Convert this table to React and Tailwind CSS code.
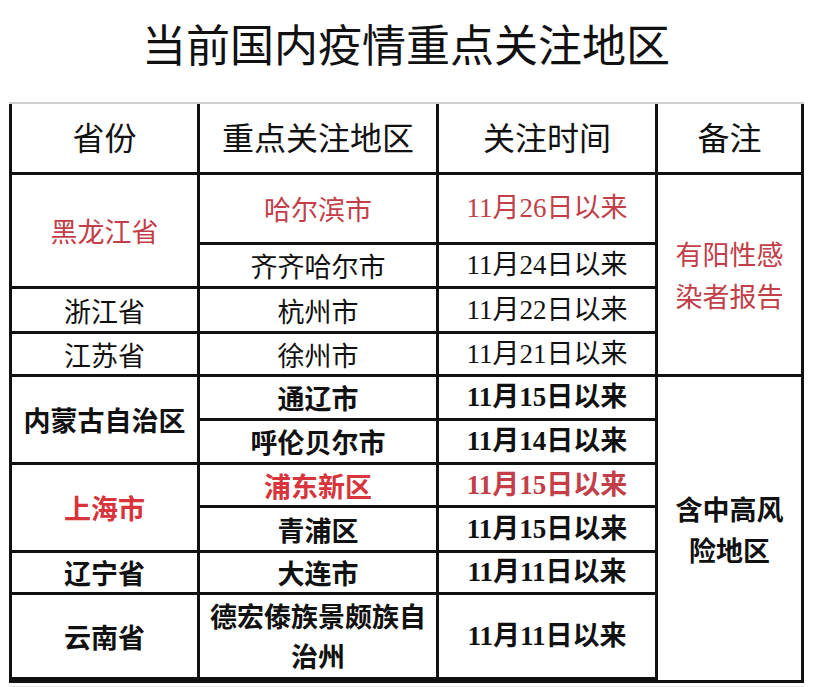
const SANS = "font-['Noto_Sans_CJK_SC','Noto_Sans',sans-serif]"

// date cells use serif digits with CJK fallback
function DateCell({ text, red, bold }) {
  return (
    <div
      className={`bg-white flex items-center justify-center text-[27px] leading-none font-['Liberation_Serif','Noto_Sans_CJK_SC',serif] ${bold ? 'font-bold' : 'font-normal'} ${red ? 'text-[#c23e48]' : 'text-[#111]'}`}
    >
      {text}
    </div>
  )
}

function Cell({ children, className = '', lead = 'leading-none' }) {
  return (
    <div className={`bg-white flex items-center justify-center text-center text-[27px] ${lead} ${className}`}>
      {children}
    </div>
  )
}

export default function App() {
  return (
    <div className={`w-[828px] h-[687px] bg-white ${SANS} text-[#111] overflow-hidden`}>
      {/* ── Title ── */}
      <div className="h-[102px] pt-[21px] pr-[16px] text-center text-[44px] leading-[44px] font-normal">
        当前国内疫情重点关注地区
      </div>

      {/* ── Table: black gaps form the grid lines ── */}
      <div
        className="ml-[9px] w-[795px] bg-[#111] border-t-2 border-[#cfcfcf] px-[3px] pb-[3px] grid gap-[3px] grid-cols-[185px_236px_216px_143px] grid-rows-[68px_67px_41px_42px_40px_41px_41px_40px_42px_39px_82px]"
      >
        {/* header */}
        <Cell className="text-[32px] pb-[4px]">省份</Cell>
        <Cell className="text-[32px] pb-[4px]">重点关注地区</Cell>
        <Cell className="text-[32px] pb-[4px]">关注时间</Cell>
        <Cell className="text-[32px] pb-[4px]">备注</Cell>

        {/* 黑龙江 */}
        <Cell className="row-span-2 text-[#c23e48]">黑龙江省</Cell>
        <Cell className="text-[#c23e48]">哈尔滨市</Cell>
        <DateCell text="11月26日以来" red />
        <Cell className="row-span-4 text-[#c23e48] px-2" lead="leading-[42px]">
          有阳性感<br />染者报告
        </Cell>
        <Cell>齐齐哈尔市</Cell>
        <DateCell text="11月24日以来" />

        <Cell>浙江省</Cell>
        <Cell>杭州市</Cell>
        <DateCell text="11月22日以来" />

        <Cell>江苏省</Cell>
        <Cell>徐州市</Cell>
        <DateCell text="11月21日以来" />

        {/* bold section */}
        <Cell className="row-span-2 font-bold">内蒙古自治区</Cell>
        <Cell className="font-bold">通辽市</Cell>
        <DateCell text="11月15日以来" bold />
        <Cell className="row-span-7 font-bold px-2" lead="leading-[41px]">
          含中高风<br />险地区
        </Cell>
        <Cell className="font-bold">呼伦贝尔市</Cell>
        <DateCell text="11月14日以来" bold />

        <Cell className="row-span-2 font-bold text-[#d8343c]">上海市</Cell>
        <Cell className="font-bold text-[#d8343c]">浦东新区</Cell>
        <DateCell text="11月15日以来" bold red />
        <Cell className="font-bold">青浦区</Cell>
        <DateCell text="11月15日以来" bold />

        <Cell className="font-bold">辽宁省</Cell>
        <Cell className="font-bold">大连市</Cell>
        <DateCell text="11月11日以来" bold />

        <Cell className="font-bold">云南省</Cell>
        <Cell className="font-bold" lead="leading-[40px]">德宏傣族景颇族自<br />治州</Cell>
        <DateCell text="11月11日以来" bold />
      </div>

      <div className="ml-[9px] w-[795px] h-[2px] mt-[3px] bg-[#e6e6e6]" />
    </div>
  )
}
